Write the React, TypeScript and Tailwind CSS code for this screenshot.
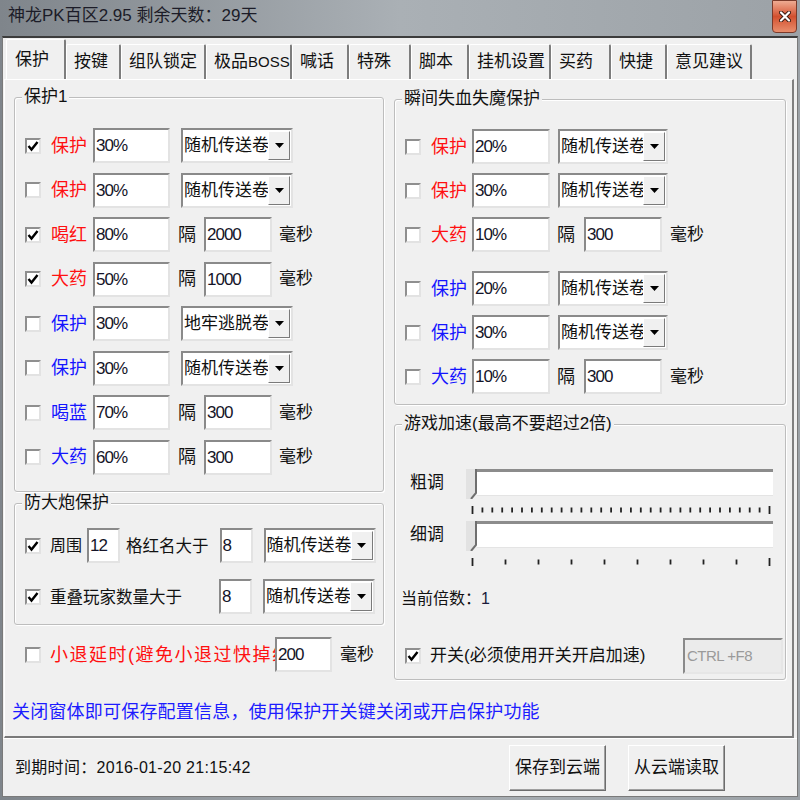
import React from 'react';

type Tone = 'red' | 'blue';

interface ProtRowData {
  on: boolean;
  tone: Tone;
  label: string;
  pct: string;
  combo?: string;
  ms?: string;
}

const tabs: { label: React.ReactNode; w: string; active?: boolean }[] = [
  { label: '保护', w: 'w-[60px]', active: true },
  { label: '按键', w: 'w-[55px]' },
  { label: '组队锁定', w: 'w-[85px]' },
  { label: <>极品<span className="text-[15px]">BOSS</span></>, w: 'w-[86px]' },
  { label: '喊话', w: 'w-[57px]' },
  { label: '特殊', w: 'w-[62px]' },
  { label: '脚本', w: 'w-[58px]' },
  { label: '挂机设置', w: 'w-[82px]' },
  { label: '买药', w: 'w-[60px]' },
  { label: '快捷', w: 'w-[56px]' },
  { label: '意见建议', w: 'w-[85px]' },
];

const leftRows: ProtRowData[] = [
  { on: true, tone: 'red', label: '保护', pct: '30%', combo: '随机传送卷' },
  { on: false, tone: 'red', label: '保护', pct: '30%', combo: '随机传送卷' },
  { on: true, tone: 'red', label: '喝红', pct: '80%', ms: '2000' },
  { on: true, tone: 'red', label: '大药', pct: '50%', ms: '1000' },
  { on: false, tone: 'blue', label: '保护', pct: '30%', combo: '地牢逃脱卷' },
  { on: false, tone: 'blue', label: '保护', pct: '30%', combo: '随机传送卷' },
  { on: false, tone: 'blue', label: '喝蓝', pct: '70%', ms: '300' },
  { on: false, tone: 'blue', label: '大药', pct: '60%', ms: '300' },
];

const rightRows: ProtRowData[] = [
  { on: false, tone: 'red', label: '保护', pct: '20%', combo: '随机传送卷' },
  { on: false, tone: 'red', label: '保护', pct: '30%', combo: '随机传送卷' },
  { on: false, tone: 'red', label: '大药', pct: '10%', ms: '300' },
  { on: false, tone: 'blue', label: '保护', pct: '20%', combo: '随机传送卷' },
  { on: false, tone: 'blue', label: '保护', pct: '30%', combo: '随机传送卷' },
  { on: false, tone: 'blue', label: '大药', pct: '10%', ms: '300' },
];

function Check({ on }: { on: boolean }) {
  return (
    <span className="flex w-[16px] h-[16px] shrink-0 items-center justify-center bg-white border-2 border-t-[#8f8f8f] border-l-[#8f8f8f] border-r-[#e2e2e2] border-b-[#e2e2e2]">
      {on && (
        <svg width="12" height="12" viewBox="0 0 12 12">
          <path d="M1.5 6 L4.5 9.5 L10.5 2" fill="none" stroke="#000" strokeWidth="2.4" />
        </svg>
      )}
    </span>
  );
}

function Edit({ value, className = '' }: { value: string; className?: string }) {
  return (
    <div
      className={`h-[35px] shrink-0 bg-white border-2 border-t-[#8a8a8a] border-l-[#8a8a8a] border-r-[#e3e3e3] border-b-[#e3e3e3] pl-[1px] text-[17px] leading-[31px] tracking-[-1px] text-[#141428] overflow-hidden whitespace-nowrap ${className}`}
    >
      {value}
    </div>
  );
}

function Combo({ value, className = '' }: { value: string; className?: string }) {
  return (
    <div
      className={`h-[35px] shrink-0 flex bg-white border-2 border-t-[#8a8a8a] border-l-[#8a8a8a] border-r-[#e3e3e3] border-b-[#e3e3e3] ${className}`}
    >
      <div className="flex-1 overflow-hidden whitespace-nowrap pl-[1px] text-[17px] leading-[31px] text-[#111]">{value}</div>
      <div className="w-[22px] my-[1px] mr-[1px] flex items-center justify-center bg-[#f0f0f0] border border-t-white border-l-white border-r-[#7a7a7a] border-b-[#7a7a7a]">
        <svg width="9" height="5" viewBox="0 0 9 5">
          <path d="M0 0 H9 L4.5 5 Z" fill="#000" />
        </svg>
      </div>
    </div>
  );
}

function Group({ title, className = '', children }: { title: string; className?: string; children?: React.ReactNode }) {
  return (
    <div className={`border border-[#bdbdbd] rounded-[3px] shadow-[inset_1px_1px_0_#ffffff,1px_1px_0_#ffffff] ${className}`}>
      <div className="-mt-[11px] ml-[7px] w-fit px-[2px] bg-[#f0f0f0] text-[17px] leading-[20px] text-[#111] whitespace-nowrap">
        {title}
      </div>
      {children}
    </div>
  );
}

function ProtRow({ r, left, className = '' }: { r: ProtRowData; left: boolean; className?: string }) {
  return (
    <div className={`flex items-center h-[35px] ${className}`}>
      <Check on={r.on} />
      <span
        className={`ml-[10px] w-[38px] text-[18px] leading-[24px] whitespace-nowrap ${r.tone === 'red' ? 'text-[#ff1010]' : 'text-[#1414ff]'}`}
      >
        {r.label}
      </span>
      <Edit value={r.pct} className={left ? 'ml-[4px] w-[77px]' : 'ml-[3px] w-[78px]'} />
      {r.combo ? (
        <Combo value={r.combo} className={left ? 'ml-[11px] w-[112px]' : 'ml-[8px] w-[110px]'} />
      ) : (
        <>
          <span className={`${left ? 'ml-[8px]' : 'ml-[7px]'} w-[18px] text-[18px] leading-[24px]`}>隔</span>
          <Edit value={r.ms ?? ''} className={left ? 'ml-[8px] w-[68px]' : 'ml-[9px] w-[78px]'} />
          <span className={`${left ? 'ml-[7px]' : 'ml-[8px]'} text-[17px] leading-[24px]`}>毫秒</span>
        </>
      )}
    </div>
  );
}

function Slider() {
  return (
    <div className="flex w-[307px] h-[30px] items-start">
      <svg width="11" height="30" viewBox="0 0 11 30" className="shrink-0">
        <path d="M0 0 H10 V24 L5 30 H0 Z" fill="#e2e2e2" />
        <path d="M10 0 V24 L5 30" fill="none" stroke="#6f6f6f" strokeWidth="2" />
      </svg>
      <div className="flex-1 h-[27px] bg-white border-t-[3px] border-t-[#8c8c8c] border-b border-b-[#e4e4e4]" />
    </div>
  );
}

function Ticks({ n }: { n: number }) {
  const xs = Array.from({ length: n }, (_, i) => 1.5 + i * (297 / (n - 1)));
  return (
    <svg width="300" height="8" className="block">
      {xs.map((x, i) => (
        <line
          key={i}
          x1={x}
          x2={x}
          y1={i === 0 || i === n - 1 ? 0 : 1.5}
          y2={i === 0 || i === n - 1 ? 8 : 6.5}
          stroke="#222"
          strokeWidth="1.8"
        />
      ))}
    </svg>
  );
}

function Btn({ children }: { children: React.ReactNode }) {
  return (
    <div className="w-[97px] h-[46px] flex items-center justify-center bg-[#f0f0f0] border border-t-white border-l-white border-r-[#6d6d6d] border-b-[#6d6d6d] shadow-[inset_-1px_-1px_0_#a0a0a0] text-[17px] text-[#111]">
      {children}
    </div>
  );
}

export default function App() {
  return (
    <div className="w-[800px] h-[800px] flex flex-col overflow-hidden bg-gradient-to-r from-[#7f858b] via-[#aab0b5] to-[#9ca2a7] font-['Liberation_Sans','Noto_Sans_CJK_SC',sans-serif] text-[#111]">
      {/* title bar */}
      <div className="h-[36px] shrink-0 flex items-start justify-between">
        <div className="pl-[8px] pt-[5px] text-[17px] leading-[22px] text-[#1c1c28]">神龙PK百区2.95 剩余天数：29天</div>
        <div className="mr-[3px] w-[25px] h-[33px] flex items-center justify-center rounded-b-[4px] border border-[#7a3a2a] bg-gradient-to-b from-[#eeab92] via-[#d24f2d] to-[#e88d6c]">
          <svg width="12" height="11" viewBox="0 0 12 11">
            <path d="M2 1.5 L10 9.5 M10 1.5 L2 9.5" stroke="#3a1a10" strokeWidth="4" strokeLinecap="round" />
            <path d="M2 1.5 L10 9.5 M10 1.5 L2 9.5" stroke="#ffffff" strokeWidth="2.2" strokeLinecap="round" />
          </svg>
        </div>
      </div>

      {/* client */}
      <div className="flex-1 mx-[2px] mb-[3px] flex flex-col bg-[#f0f0f0] border-t-2 border-t-[#3c3c3c] border-l border-r border-b border-l-[#7a7a7a] border-r-[#7a7a7a] border-b-[#7a7a7a]">
        {/* tabs */}
        <div className="h-[41px] shrink-0 flex items-end pl-[3px]">
          {tabs.map((t, i) => (
            <div
              key={i}
              className={`${t.w} ${t.active ? 'h-[40px] pl-[8px]' : 'h-[35px] pl-[7px]'} shrink-0 flex items-center whitespace-nowrap overflow-hidden rounded-t-[2px] bg-[#f0f0f0] border-t border-l border-t-white border-l-white border-r-2 border-r-[#7d7d7d] text-[17px] leading-[22px]`}
            >
              {t.label}
            </div>
          ))}
        </div>

        {/* tab panel */}
        <div className="h-[659px] shrink-0 ml-[1px] mr-[3px] flex flex-col border-l border-t border-l-white border-t-white border-r-2 border-b-2 border-r-[#808080] border-b-[#7a7a7a]">
          <div className="flex items-start gap-[10px] pl-[9px]">
            {/* left column */}
            <div className="w-[370px] shrink-0 mt-[17px] flex flex-col">
              <Group title="保护1" className="h-[395px]">
                <div className="mt-[21px] pl-[10px] flex flex-col gap-[9.5px]">
                  {leftRows.map((r, i) => (
                    <ProtRow key={i} r={r} left />
                  ))}
                </div>
              </Group>

              <Group title="防大炮保护" className="mt-[11px] h-[122px]">
                <div className="mt-[15px] pl-[10px] flex flex-col gap-[16px]">
                  <div className="flex items-center h-[35px]">
                    <Check on />
                    <span className="ml-[9px] text-[16px] leading-[22px]">周围</span>
                    <Edit value="12" className="ml-[5px] w-[33px]" />
                    <span className="ml-[6px] text-[16.5px] leading-[22px] whitespace-nowrap">格红名大于</span>
                    <Edit value="8" className="ml-[11px] w-[33px]" />
                    <Combo value="随机传送卷" className="ml-[11px] w-[112px]" />
                  </div>
                  <div className="flex items-center h-[35px]">
                    <Check on />
                    <span className="ml-[9px] w-[169px] text-[16.5px] leading-[22px] whitespace-nowrap">重叠玩家数量大于</span>
                    <Edit value="8" className="w-[33px]" />
                    <Combo value="随机传送卷" className="ml-[11px] w-[112px]" />
                  </div>
                </div>
              </Group>

              <div className="mt-[12px] pl-[11px] flex items-center h-[35px]">
                <Check on={false} />
                <span className="ml-[9px] w-[225px] overflow-hidden whitespace-nowrap text-[18px] leading-[24px] tracking-[1.5px] text-[#ff1010]">
                  小退延时(避免小退过快掉线)
                </span>
                <Edit value="200" className="w-[57px]" />
                <span className="ml-[8px] text-[17px] leading-[24px]">毫秒</span>
              </div>
            </div>

            {/* right column */}
            <div className="w-[392px] shrink-0 mt-[19px] flex flex-col">
              <Group title="瞬间失血失魔保护" className="h-[306px]">
                <div className="mt-[20px] pl-[10px] flex flex-col gap-[9px]">
                  {rightRows.map((r, i) => (
                    <ProtRow key={i} r={r} left={false} className={i === 3 ? 'mt-[10px]' : ''} />
                  ))}
                </div>
              </Group>

              <Group title="游戏加速(最高不要超过2倍)" className="mt-[19px] h-[256px]">
                <div className="flex flex-col">
                  <div className="mt-[35px] flex items-start">
                    <span className="ml-[15px] w-[34px] text-[17px] leading-[28px]">粗调</span>
                    <div className="ml-[22px]">
                      <Slider />
                    </div>
                  </div>
                  <div className="mt-[7px] ml-[76px]">
                    <Ticks n={31} />
                  </div>
                  <div className="mt-[7px] flex items-start">
                    <span className="ml-[15px] w-[34px] text-[17px] leading-[28px]">细调</span>
                    <div className="ml-[22px]">
                      <Slider />
                    </div>
                  </div>
                  <div className="mt-[7px] ml-[76px]">
                    <Ticks n={10} />
                  </div>
                  <div className="mt-[23px] pl-[6px] text-[16px] leading-[20px]">
                    当前倍数：<span className="text-[#1a1a3c]">1</span>
                  </div>
                  <div className="mt-[29px] pl-[10px] pr-[2px] flex items-center h-[36px]">
                    <Check on />
                    <span className="ml-[9px] text-[17px] leading-[24px] whitespace-nowrap">开关(必须使用开关开启加速)</span>
                    <div className="ml-auto w-[100px] h-[36px] bg-[#ebebeb] border-2 border-t-[#8a8a8a] border-l-[#8a8a8a] border-r-[#e6e6e6] border-b-[#e6e6e6] pl-[2px] text-[15px] leading-[32px] tracking-[-0.5px] text-[#9a9a9a]">
                      CTRL +F8
                    </div>
                  </div>
                </div>
              </Group>
            </div>
          </div>

          <div className="mt-[20px] pl-[7px] text-[18px] leading-[24px] tracking-[0.2px] text-[#1c1cff] whitespace-nowrap">
            关闭窗体即可保存配置信息，使用保护开关键关闭或开启保护功能
          </div>
        </div>

        {/* status */}
        <div className="flex-1 flex items-center pl-[12px] border-t border-t-white">
          <span className="text-[16px] leading-[20px] tracking-[0.3px]">到期时间：2016-01-20 21:15:42</span>
          <div className="ml-auto mr-[72px] flex gap-[22px]">
            <Btn>保存到云端</Btn>
            <Btn>从云端读取</Btn>
          </div>
        </div>
      </div>
    </div>
  );
}
